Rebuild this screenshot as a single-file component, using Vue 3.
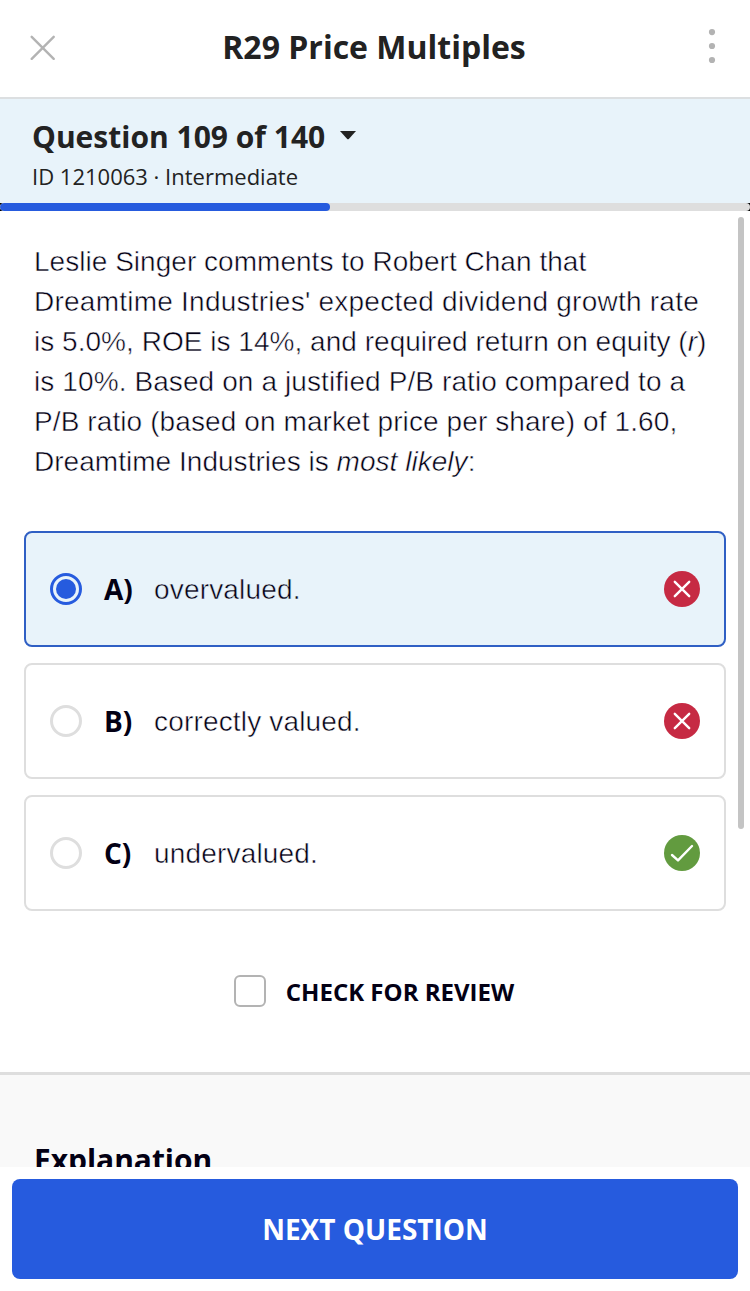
<script setup>
import { ref } from 'vue'

const current = ref(109)
const total = ref(140)
const progress = ref(44)
const selected = ref('A')
const review = ref(false)

const answers = [
  { letter: 'A', text: 'overvalued.', correct: false },
  { letter: 'B', text: 'correctly valued.', correct: false },
  { letter: 'C', text: 'undervalued.', correct: true }
]
</script>

<template>
  <div class="quiz">
    <header class="topbar">
      <button class="icon-btn" aria-label="Close">
        <svg width="26" height="26" viewBox="0 0 26 26">
          <path d="M1.7 2.8L23.7 24.8M23.7 2.8L1.7 24.8" fill="none" stroke="#b3b3b3" stroke-width="2.4" stroke-linecap="round" />
        </svg>
      </button>
      <h1>R29 Price Multiples</h1>
      <button class="icon-btn" aria-label="More">
        <svg width="8" height="36" viewBox="0 0 8 36">
          <g fill="#b3b3b3">
            <circle cx="4" cy="3.1" r="3.1" />
            <circle cx="4" cy="17" r="3.1" />
            <circle cx="4" cy="31" r="3.1" />
          </g>
        </svg>
      </button>
    </header>

    <div class="status">
      <div class="counter">
        <h2>Question {{ current }} of {{ total }}</h2>
        <svg width="16" height="9" viewBox="0 0 16 9"><path d="M0 0H16L8.8 7.9Q8 8.7 7.2 7.9Z" fill="#222" /></svg>
      </div>
      <p>ID 1210063 · Intermediate</p>
    </div>
    <div class="track">
      <div class="bar"><div class="fill" :style="{ width: progress + '%' }"></div></div>
    </div>

    <main class="content">
      <p class="question">
        <span class="l1">Leslie Singer comments to Robert Chan that</span>
        <span class="l2">Dreamtime Industries' expected dividend growth rate</span>
        <span class="l3">is 5.0%, ROE is 14%, and required return on equity (<i>r</i>)</span>
        <span class="l4">is 10%. Based on a justified P/B ratio compared to a</span>
        <span class="l5">P/B ratio (based on market price per share) of 1.60,</span>
        <span class="l6">Dreamtime Industries is <i>most likely</i>:</span>
      </p>

      <ul class="answers">
        <li
          v-for="answer in answers"
          :key="answer.letter"
          :class="{ active: selected === answer.letter }"
          @click="selected = answer.letter"
        >
          <span class="radio" />
          <b>{{ answer.letter }})</b>
          <span class="text">{{ answer.text }}</span>
          <svg width="36" height="36" viewBox="0 0 36 36" fill="none" stroke="#fff" stroke-width="2.4" stroke-linecap="round" stroke-linejoin="round">
            <circle cx="18" cy="18" r="18" stroke="none" :fill="answer.correct ? '#629b3f' : '#c62a43'" />
            <path v-if="answer.correct" d="M8 20L14 25.4L28 11" />
            <path v-else d="M10.8 10.8L25.2 25.2M25.2 10.8L10.8 25.2" />
          </svg>
        </li>
      </ul>

      <div class="review" @click="review = !review">
        <span class="box" :class="{ checked: review }" />
        <span>CHECK FOR REVIEW</span>
      </div>

      <section class="explanation">
        <h3>Explanation</h3>
      </section>
      <div class="scrollbar" />
    </main>

    <footer>
      <button class="next">NEXT QUESTION</button>
    </footer>
  </div>
</template>

<style>
body {
  margin: 0;
  background: #fff;
}
</style>

<style scoped>
.quiz {
  display: flex;
  flex-direction: column;
  width: 750px;
  height: 1291px;
  overflow: hidden;
  background: #fff;
  color: #030014;
  font-family: 'Open Sans', 'Noto Sans', sans-serif;
}
h1,
h2,
h3,
p,
ul {
  margin: 0;
  padding: 0;
}
button {
  border: 0;
  padding: 0;
  background: none;
  font-family: inherit;
}

.topbar {
  box-sizing: border-box;
  height: 99px;
  flex: none;
  display: flex;
  align-items: center;
  justify-content: space-between;
  padding: 0 34px 3px 30px;
  border-bottom: 2px solid #dcdfe1;
}
.topbar h1 {
  font-size: 32px;
  line-height: 44px;
  font-weight: 700;
  color: #222;
  padding-right: 16px;
}
.icon-btn {
  display: flex;
}

.status {
  box-sizing: border-box;
  height: 104px;
  flex: none;
  padding: 18px 32px 0;
  background: #e8f3fa;
  color: #222;
}
.counter {
  display: flex;
  align-items: center;
  gap: 15px;
}
.counter h2 {
  font-size: 30px;
  line-height: 40px;
  font-weight: 700;
}
.counter svg {
  margin-top: -4px;
}
.status p {
  font-size: 22px;
  line-height: 30px;
  margin-top: 4px;
}

.track {
  flex: none;
  height: 8px;
  background: #000;
}
.bar {
  height: 8px;
  border-radius: 4px;
  background: #dedede;
  overflow: hidden;
}
.fill {
  height: 8px;
  border-radius: 4px;
  background: #265bde;
}

.content {
  position: relative;
  flex: 1;
  min-height: 0;
  overflow: hidden;
}
.question {
  padding: 31px 34px 0;
  height: 240px;
}
.question span {
  display: block;
  white-space: nowrap;
  letter-spacing: 0.03px;
}
.question .l2 {
  letter-spacing: 0.24px;
}
.question .l4,
.question .l5 {
  letter-spacing: 0.1px;
}
/* the background-coloured stroke gives the body copy its light weight */
.question,
.answers .text {
  font-family: 'Liberation Sans', Arial, sans-serif;
  font-size: 28px;
  line-height: 40px;
  -webkit-text-stroke: 0.5px #fff;
}

.answers {
  list-style: none;
  margin: 49px 24px 0;
  display: flex;
  flex-direction: column;
  gap: 16px;
}
.answers li {
  box-sizing: border-box;
  height: 116px;
  display: flex;
  align-items: center;
  padding: 0 24px;
  border: 2px solid #dedede;
  border-radius: 8px;
}
.answers li.active {
  border-color: #2f5fc4;
  background: #e8f3fa;
}
.radio {
  box-sizing: border-box;
  width: 32px;
  height: 32px;
  border: 3px solid #dedede;
  border-radius: 50%;
  display: flex;
  align-items: center;
  justify-content: center;
}
.active .radio {
  border-color: #265bde;
}
.active .radio::after {
  content: '';
  width: 20px;
  height: 20px;
  border-radius: 50%;
  background: #265bde;
}
.answers b {
  width: 50px;
  margin-left: 22px;
  font-size: 28px;
  line-height: 40px;
}
.answers .text {
  flex: 1;
  padding-top: 2px;
  letter-spacing: 0.17px;
}
.answers .active .text {
  -webkit-text-stroke-color: #e8f3fa;
}

.review {
  display: flex;
  align-items: center;
  justify-content: center;
  gap: 20px;
  height: 34px;
  margin-top: 63px;
  padding-right: 2px;
  font-size: 24px;
  font-weight: 700;
}
.box {
  box-sizing: border-box;
  width: 32px;
  height: 32px;
  border: 2px solid #b3b3b3;
  border-radius: 6px;
}
.box.checked {
  background: #265bde;
}

.explanation {
  height: 120px;
  margin-top: 64px;
  padding: 64px 34px 0;
  border-top: 3px solid #dedede;
  background: #f9f9f9;
}
.explanation h3 {
  font-size: 30px;
  line-height: 42px;
  letter-spacing: -0.05px;
}
.scrollbar {
  position: absolute;
  top: 6px;
  right: 6px;
  width: 6px;
  height: 612px;
  border-radius: 3px;
  background: #c4c4c4;
}

footer {
  box-sizing: border-box;
  flex: none;
  height: 124px;
  padding: 12px;
  background: #fff;
}
.next {
  width: 100%;
  height: 100px;
  border-radius: 8px;
  background: #265bde;
  color: #fff;
  font-size: 28px;
  font-weight: 700;
}
</style>
